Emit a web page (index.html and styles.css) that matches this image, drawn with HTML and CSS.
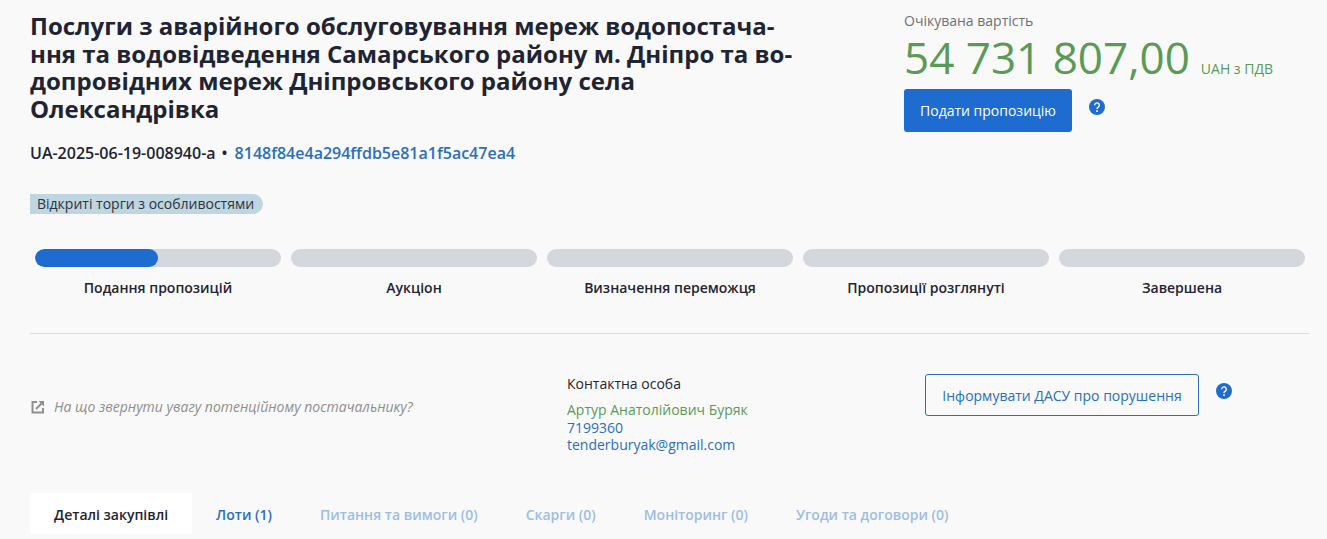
FILE: index.html
```html
<!DOCTYPE html>
<html lang="uk">
<head>
<meta charset="utf-8">
<title>Тендер</title>
<link rel="stylesheet" href="styles.css">
</head>
<body>
<main class="page">
  <header class="head">
    <div class="head-left">
      <h1 class="title">Послуги з аварійного обслуговування мереж водопостача-<br>ння та водовідведення Самарського району м. Дніпро та во-<br>допровідних мереж Дніпровського району села<br>Олександрівка</h1>
      <div class="ids"><span>UA-2025-06-19-008940-a</span><span class="dot">•</span><a class="hash">8148f84e4a294ffdb5e81a1f5ac47ea4</a></div>
      <div class="badge-row"><span class="badge">Відкриті торги з особливостями</span></div>
    </div>
    <div class="head-right">
      <div class="price-label">Очікувана вартість</div>
      <div class="price"><span class="price-num">54 731 807,00</span><span class="price-cur">UAH з ПДВ</span></div>
      <div class="action">
        <button class="btn-primary">Подати пропозицію</button>
        <svg class="help help-a" viewBox="0 0 16 16" width="16" height="16"><circle cx="8" cy="8" r="8" fill="#1e6cd0"/><path d="M5.7 6.2a2.3 2.3 0 1 1 3.6 1.9c-.8.5-1.3.9-1.3 1.8" fill="none" stroke="#fff" stroke-width="1.4"/><circle cx="8" cy="12" r=".95" fill="#fff"/></svg>
      </div>
    </div>
  </header>

  <section class="steps">
    <div class="step"><div class="track"><div class="fill"></div></div><div class="step-name">Подання пропозицій</div></div>
    <div class="step"><div class="track"></div><div class="step-name">Аукціон</div></div>
    <div class="step"><div class="track"></div><div class="step-name">Визначення переможця</div></div>
    <div class="step"><div class="track"></div><div class="step-name">Пропозиції розглянуті</div></div>
    <div class="step"><div class="track"></div><div class="step-name">Завершена</div></div>
  </section>

  <hr class="rule">

  <section class="info">
    <div class="hint">
      <svg viewBox="0 0 14 14" width="14" height="14"><path d="M6 2H1.5v10.5H12V8" fill="none" stroke="#8f8f8f" stroke-width="2"/><path d="M5 9l6.5-6.5" fill="none" stroke="#8f8f8f" stroke-width="2"/><path d="M7.5 1H13v5.5z" fill="#8f8f8f"/></svg>
      <em>На що звернути увагу потенційному постачальнику?</em>
    </div>
    <div class="contact">
      <div class="contact-h">Контактна особа</div>
      <div class="contact-name">Артур Анатолійович Буряк</div>
      <div class="contact-link">7199360</div>
      <div class="contact-link">tenderburyak@gmail.com</div>
    </div>
    <div class="report">
      <button class="btn-outline">Інформувати ДАСУ про порушення</button>
      <svg class="help help-b" viewBox="0 0 16 16" width="16" height="16"><circle cx="8" cy="8" r="8" fill="#1e6cd0"/><path d="M5.7 6.2a2.3 2.3 0 1 1 3.6 1.9c-.8.5-1.3.9-1.3 1.8" fill="none" stroke="#fff" stroke-width="1.4"/><circle cx="8" cy="12" r=".95" fill="#fff"/></svg>
    </div>
  </section>

  <nav class="tabs">
    <a class="tab tab-active">Деталі закупівлі</a>
    <a class="tab tab-link">Лоти (1)</a>
    <a class="tab">Питання та вимоги (0)</a>
    <a class="tab">Скарги (0)</a>
    <a class="tab">Моніторинг (0)</a>
    <a class="tab">Угоди та договори (0)</a>
  </nav>
</main>
</body>
</html>
```
FILE: styles.css
```css
* { box-sizing: border-box; }
html, body { margin: 0; height: 539px; overflow: hidden; }
body { background: #f9f9f9; font-family: "Open Sans", "Noto Sans", sans-serif; color: #1e2433; }
.page { padding: 0 18px 0 30px; }
.head { display: flex; height: 236px; }
.head-left { width: 874px; padding-top: 12px; }
.title { margin: 0; width: 800px; font-size: 24px; line-height: 27.6px; font-weight: 700; color: #1e2433; }
.ids { margin-top: 20px; display: flex; align-items: center; font-size: 16px; line-height: 22px; font-weight: 600; }
.dot { margin: 0 7px 0 6px; }
.hash { color: #2a6fbd; }
.badge-row { margin-top: 30px; display: flex; }
.badge { background: #bfd5df; border-radius: 0 10px 10px 0; height: 20px; padding: 0 9px 0 7px; font-size: 14px; line-height: 20px; color: #2b3440; }
.head-right { padding-top: 12px; }
.price-label { font-size: 14px; line-height: 18px; color: #6f6f74; }
.price { display: flex; align-items: baseline; margin-top: -1px; color: #5a9a57; }
.price-num { font-size: 44px; line-height: 56px; }
.price-cur { margin-left: 11px; font-size: 14px; }
.action { display: flex; align-items: flex-start; margin-top: 4px; }
.btn-primary { width: 168px; height: 43px; border: 0; border-radius: 3px; background: #1e6cd0; color: #fff; font: 14px "Open Sans", sans-serif; }
.help { flex: none; }
.help-a { margin: 10px 0 0 17px; }
.help-b { margin: 9px 0 0 17px; }
.steps { display: flex; gap: 10px; padding: 0 5px; margin-top: 13px; width: 1280px; }
.step { width: 246px; text-align: center; }
.track { height: 18px; border-radius: 9px; background: #d4d8dc; overflow: hidden; }
.fill { width: 50%; height: 18px; border-radius: 9px; background: #1e6cd0; }
.step-name { margin-top: 11px; font-size: 14px; line-height: 20px; font-weight: 600; color: #1e2433; }
.rule { margin: 35px 0 0; border: 0; border-top: 1px solid #d9dcdd; }
.info { display: flex; height: 159px; padding-top: 40px; }
.hint { display: flex; align-items: center; gap: 9px; width: 537px; height: 64px; padding-top: 1px; padding-left: 1px; font-size: 14px; color: #8f8f8f; }
.contact { width: 358px; padding-top: 1px; font-size: 14px; line-height: 17.3px; }
.contact-h { margin-bottom: 9px; color: #1e2433; }
.contact-name { color: #5a9a57; }
.contact-link { color: #2a6fbd; }
.report { display: flex; align-items: flex-start; }
.btn-outline { width: 274px; height: 42px; background: transparent; border: 1px solid #2a6fbd; border-radius: 3px; color: #2a6fbd; font: 14px "Open Sans", sans-serif; }
.tabs { display: flex; height: 41px; }
.tab { height: 41px; padding: 0 24px; font-size: 14px; line-height: 44px; font-weight: 600; color: #9dbde6; white-space: nowrap; }
.tab-active { background: #fff; color: #1e2433; }
.tab-link { color: #2a6fbd; }
```
